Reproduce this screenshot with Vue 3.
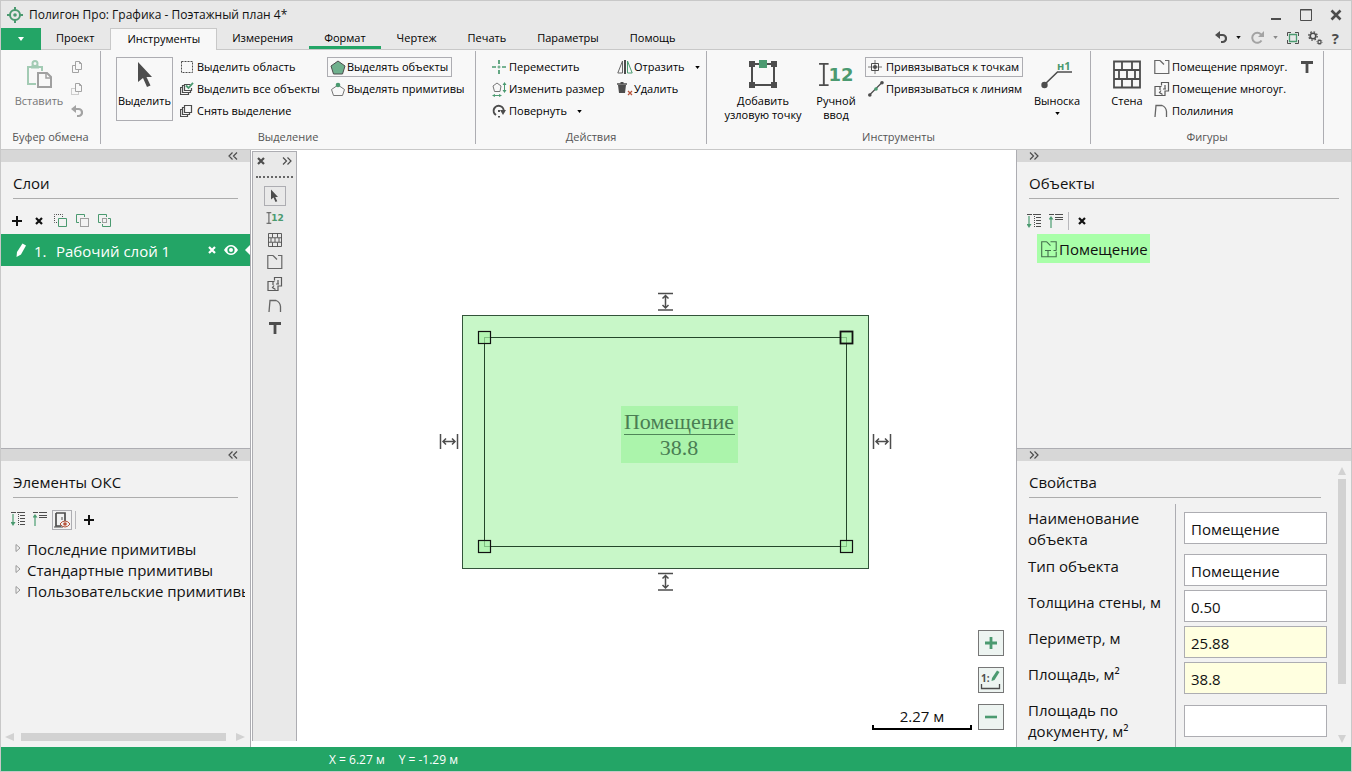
<script setup>
import { h, ref } from 'vue'

const D = '#4d4d4d'
const G = '#4b9a70'

const glyphs = {
  logo: [16, 16, `<g fill="none" stroke="${G}" stroke-width="2"><circle cx="8" cy="8" r="5"/><path d="M8 0v4M8 12v4M0 8h4M12 8h4"/></g><circle cx="8" cy="8" r="1.800" fill="${G}"/>`],
  caret: [6, 4, `<path d="M0 0h6L3 4z" fill="currentColor"/>`],
  paste: [26, 29, `<g fill="none" stroke="#a3cbb4" stroke-width="2"><path d="M10 24H2V7h14v4"/><circle cx="9" cy="3.500" r="2.500"/><path d="M5 7h8" stroke-width="3"/></g><path d="M12 13h9l4 4v10H12z" fill="#f8f8f8" stroke="#a0a0a0" stroke-width="2"/><path d="M20 13v5h5" fill="none" stroke="#a0a0a0" stroke-width="1.500"/>`],
  copy: [12, 13, `<g fill="none" stroke="#a3a3a3"><path d="M4.500 4.500h-3v7h6v-3"/><path d="M4.500.500h4l2 2v6h-6z"/><path d="M8.500.500v2h2"/></g>`],
  cut: [12, 13, `<g fill="none" stroke="#a3a3a3"><path d="M4.500 5.500h-4v6h7v-3" stroke-dasharray="1 1"/><path d="M4.500.500h4l2 2v6h-6z"/><path d="M8.500.500v2h2"/></g>`],
  undo: [12, 13, `<path d="M3 4h4.500a3 3 0 0 1 0 7H6" fill="none" stroke="currentColor" stroke-width="2.200"/><path d="M0 4l5-4v8z" fill="currentColor"/>`],
  redo: [14, 13, `<path d="M11 3.500a5 5 0 1 0 .5 6" fill="none" stroke="currentColor" stroke-width="2"/><path d="M14 0v6H8z" fill="currentColor"/>`],
  cursor: [16, 28, `<path d="M1 1v20l5-4 4 9 3.500-1.500-4-8.500H15z" fill="${D}"/>`],
  area: [14, 14, `<path d="M1.500 1.500h11v11h-11z" fill="none" stroke="${D}" stroke-dasharray="2 1"/>`],
  all: [14, 14, `<g fill="none" stroke="${D}" stroke-width="1.200"><path d="M2.500 5.500h-2v7h8v-2M4.500 3.500h-2v7h8v-2"/><path d="M10.500 2.500h-6v6h7V6"/></g><path d="M6 3.500l2.500 2.500L13 .800" fill="none" stroke="${G}" stroke-width="1.800"/>`],
  none: [14, 14, `<g fill="none" stroke="${D}" stroke-width="1.200"><path d="M2.500 5.500h-2v7h7v-2M4.500 3.500h-2v7h7v-2M4.500 1.500h7v7h-7z"/></g>`],
  pentagon: [16, 15, `<path d="M8 1l7 5-2.500 8h-9L1 6z" fill="#6fb08d" stroke="${D}"/>`],
  primitive: [16, 15, `<path d="M8 3l6.500 4.500-2 6h-9l-2-6z" fill="none" stroke="#777"/><circle cx="8" cy="3" r="2.300" fill="${G}"/>`],
  move: [14, 14, `<path d="M7 0v4M7 10v4M0 7h4M10 7h4" stroke="${G}" stroke-width="1.700"/><path d="M7 5.500v3M5.500 7h3" stroke="${G}"/>`],
  resize: [15, 15, `<path d="M5 1l4 3-1 5.500H2.500L1 4z" fill="none" stroke="#777"/><g stroke="${G}" fill="${G}"><path d="M12.500 2v7M2 13.500h6" fill="none"/><path d="M12.500 0l2 3h-4zM12.500 11l-2-3h4zM0 13.500l3-1.500v3zM10 13.500L7 12v3z" stroke="none"/></g>`],
  rotate: [14, 14, `<path d="M4 11A5 5 0 1 1 11.500 8" fill="none" stroke="${D}" stroke-width="2"/><path d="M8 6h6l-3 5z" fill="${D}"/><path d="M6 6h2v2H6zM6 12h2v1.500H6z" fill="${D}"/>`],
  mirror: [16, 14, `<path d="M5.500 1v12H.800z" fill="none" stroke="#666"/><path d="M8 0v14" stroke="${D}" stroke-width="2"/><path d="M10.500 1v12h4.700z" fill="none" stroke="${G}"/>`],
  trash: [16, 14, `<path d="M1 3h8l-1 8H2z" fill="${D}"/><path d="M0 2h10M3.500 .800h3" stroke="${D}" stroke-width="1.500"/><path d="M11 9l4 4M15 9l-4 4" stroke="#b8533a" stroke-width="1.200"/>`],
  node: [28, 29, `<path d="M3 4h22v21H3z" fill="none" stroke="${D}" stroke-width="2"/><path d="M0 1h6v6H0zM22 1h6v6h-6zM0 22h6v6H0zM22 22h6v6h-6z" fill="${D}"/><path d="M10 0h8v8h-8z" fill="${G}"/>`],
  manual: [34, 24, `<path d="M1 2h9M1 22h9" stroke="${D}" stroke-width="1.800"/><path d="M5.500 2v20" stroke="${D}" stroke-width="1.800"/><text x="10" y="18" font-family="DejaVu Sans" font-weight="bold" font-size="17" fill="${G}">12</text>`],
  snapPoint: [14, 14, `<path d="M7 0v3M7 11v3M0 7h3M11 7h3" stroke="#777"/><path d="M3.500 3.500h7v7h-7z" fill="none" stroke="${D}"/><path d="M7 4v6M4 7h6" stroke="#888"/><circle cx="7" cy="7" r="2" fill="${D}"/>`],
  snapLine: [16, 16, `<path d="M1.500 14L14 1.500" stroke="${D}" stroke-width="1.200"/><circle cx="1.800" cy="14" r="1.800" fill="${D}"/><circle cx="14" cy="1.800" r="1.800" fill="${D}"/><circle cx="8" cy="8" r="1.800" fill="${G}"/>`],
  callout: [32, 29, `<path d="M3 25L16.500 12H31" fill="none" stroke="${D}" stroke-width="1.600"/><circle cx="3.500" cy="25" r="3.200" fill="${D}"/><text x="16" y="10" font-family="Open Sans" font-weight="bold" font-size="11" fill="${G}">н1</text>`],
  wall: [28, 28, `<path d="M1 1h26v26H1zM1 9.500h26M1 18.500h26M9 1v8M19 1v8M14 10v8M22 10v8M6 10v8M9 19v8M19 19v8" fill="none" stroke="${D}" stroke-width="1.800"/>`],
  roomRect: [16, 16, `<path d="M6 1.500H.800v13h14V1.500H11M6 1.500l4 4" fill="none" stroke="#666" stroke-width="1.200"/>`],
  roomPoly: [16, 16, `<path d="M7.500 4.500V1.500h7v8.500H11v4.500H1v-9h6.500M6 6v3M7 9.500l-1.500 2 3 2M11 4v4M9 8h3" fill="none" stroke="#5a5a5a" stroke-width="1.200"/>`],
  polyline: [14, 14, `<path d="M1 13L2 1.500h6q4 1.500 4.500 6V13" fill="none" stroke="#666" stroke-width="1.300"/>`],
  letter: [14, 14, `<path d="M1 2.500h12M7 2.500V13" stroke="${D}" stroke-width="2.800"/>`],
  chevL: [10, 8, `<path d="M4.500.500L1 4l3.500 3.500M9 .500L5.500 4 9 7.500" fill="none" stroke="${D}" stroke-width="1.200"/>`],
  chevR: [10, 8, `<path d="M1 .500L4.500 4 1 7.500M5.500.500L9 4 5.500 7.500" fill="none" stroke="${D}" stroke-width="1.200"/>`],
  x: [8, 8, `<path d="M1 1l6 6M7 1L1 7" stroke="currentColor" stroke-width="2.200"/>`],
  plus: [10, 10, `<path d="M5 0v10M0 5h10" stroke="currentColor" stroke-width="2"/>`],
  minus: [12, 12, `<path d="M0 6h12" stroke="currentColor" stroke-width="2.600"/>`],
  zoomIn: [12, 12, `<path d="M6 0v12M0 6h12" stroke="currentColor" stroke-width="2.800"/>`],
  below: [14, 14, `<path d="M3 8.500H.500v-8h8V3" fill="none" stroke="${D}" stroke-dasharray="1 1"/><path d="M4.500 4.500h8v8h-8z" fill="none" stroke="${G}"/>`],
  above: [14, 14, `<path d="M3 8.500H.500v-8h8V3" fill="none" stroke="${G}"/><path d="M4.500 4.500h8v8h-8z" fill="none" stroke="${D}" stroke-dasharray="1 1"/>`],
  between: [14, 14, `<path d="M3 8.500H.500v-8h8V3M10 4.500h2.500v8h-8V10" fill="none" stroke="${G}"/><path d="M4.500 4.500h4v4h-4z" fill="none" stroke="${D}" stroke-dasharray="1 1"/>`],
  pencil: [12, 15, `<path d="M7.500.500L11 2.500 6 11.500 1.500 14 2 9z" fill="currentColor"/>`],
  eye: [14, 10, `<path d="M0 5q3-5 7-5t7 5q-3 5-7 5T0 5z" fill="#fff"/><circle cx="7" cy="5" r="2.800" fill="none" stroke="#23a566" stroke-width="1.600"/>`],
  expand: [15, 15, `<path d="M2 2v10" stroke="#8dbfa4" stroke-width="2"/><path d="M-.500 10h5L2 14z" fill="${G}"/><path d="M0 .500h5M6 .500h8M9 3.500h5M9 6.500h5M9 9.500h5M9 12.500h5" stroke="${D}"/><path d="M7.500 2v12" stroke="${D}" stroke-dasharray="1 1"/>`],
  collapse: [15, 15, `<path d="M2 4v10" stroke="#8dbfa4" stroke-width="2"/><path d="M-.500 5.500h5L2 2z" fill="${G}"/><path d="M0 .500h5M6 .500h8M6 3.500h8M6 5.500h8" stroke="${D}"/>`],
  door: [17, 16, `<path d="M2 1h9v9M2 1v13h5" fill="none" stroke="${D}" stroke-width="1.700"/><path d="M0 15h9" stroke="${D}"/><path d="M8 5v3" stroke="${D}"/><path d="M6 12q2-3 5-3t5 3q-2 3-5 3t-5-3z" fill="#f1f1f1" stroke="#b8533a"/><circle cx="11" cy="12" r="1.800" fill="#b8533a"/>`],
  branch: [6, 8, `<path d="M1 .500l4 3.500-4 3.500z" fill="none" stroke="#999"/>`],
  room: [16, 17, `<path d="M5.500.700H.700v15h14.500v-5M15.200 9V.700H9.500M5.500.700l4 4M4 9.500h6M7 9.500v6M12.500 9.500h3" fill="none" stroke="#44704d" stroke-width="1.100"/>`],
  minimize: [12, 12, `<path d="M1 10h10" stroke="${D}" stroke-width="2"/>`],
  maximize: [12, 12, `<path d="M.500.500h11v11H.500z" fill="none" stroke="${D}"/><path d="M0 1h12" stroke="${D}"/>`],
  close: [12, 12, `<path d="M1.500 1.500l9 9M10.500 1.500l-9 9" stroke="${D}" stroke-width="2.600"/>`],
  frame: [12, 12, `<path d="M.500 4V.500H4M8 .500h3.500V4M11.500 8v3.500H8M4 11.500H.500V8" fill="none" stroke="${D}"/><path d="M2.500 2.500h7v7h-7z" fill="none" stroke="${G}" stroke-width="1.300"/>`],
  gears: [15, 14, `<g fill="none" stroke="${D}"><circle cx="5" cy="5" r="2.800" stroke-width="1.600"/><circle cx="5" cy="5" r="4.200" stroke-width="1.300" stroke-dasharray="1.600 1.700"/><circle cx="11.500" cy="11" r="1.600" stroke-width="1.200"/><circle cx="11.500" cy="11" r="2.600" stroke-width=".8" stroke-dasharray="1 1"/></g>`],
  scale: [22, 20, `<text x="1" y="12" font-family="Open Sans" font-weight="bold" font-size="10" fill="${D}">1:</text><path d="M1.500 14v4.500h18V14" fill="none" stroke="${D}" stroke-width="1.300"/><path d="M17 .500l2.500 1.500-5 8-3 1 .5-3z" fill="${G}"/>`],
}

const Icon = (props) => {
  const [w, hh, body] = glyphs[props.name]
  return h('svg', {
    width: props.w || w,
    height: props.h || hh,
    viewBox: `0 0 ${w} ${hh}`,
    'aria-hidden': 'true',
    innerHTML: body,
  })
}
Icon.props = ['name', 'w', 'h']

const tabs = ['Проект', 'Инструменты', 'Измерения', 'Формат', 'Чертеж', 'Печать', 'Параметры', 'Помощь']
const selectCols = [
  [['area', 'Выделить область'], ['all', 'Выделить все объекты'], ['none', 'Снять выделение']],
  [['pentagon', 'Выделять объекты', true], ['primitive', 'Выделять примитивы']],
]
const strip = [
  ['cursor', 'Выделить', 9, 14], ['manual', 'Ручной ввод', 18, 14], ['wall', 'Стена', 14, 14],
  ['roomRect', 'Помещение прямоуг.', 16, 16], ['roomPoly', 'Помещение многоуг.', 16, 16],
  ['polyline', 'Полилиния', 14, 14], ['letter', 'Текст', 14, 14],
]
const tree = ['Последние примитивы', 'Стандартные примитивы', 'Пользовательские примитивы']
const fields = ref([
  { id: 'name', label: 'Наименование объекта', value: 'Помещение' },
  { id: 'type', label: 'Тип объекта', value: 'Помещение' },
  { id: 'wall', label: 'Толщина стены, м', value: '0.50' },
  { id: 'perimeter', label: 'Периметр, м', value: '25.88', computed: true },
  { id: 'area', label: 'Площадь, м²', value: '38.8', computed: true },
  { id: 'docArea', label: 'Площадь по документу, м²', value: '' },
])
const handles = [[46, 47, 1.2], [408, 47, 1.8], [46, 256, 1.2], [408, 256, 1.2]]
</script>

<template>
  <div class="app">
    <header class="titlebar">
      <Icon name="logo" />
      <h1>Полигон Про: Графика - Поэтажный план 4*</h1>
      <div class="window-buttons">
        <button aria-label="Свернуть"><Icon name="minimize" /></button>
        <button aria-label="Развернуть"><Icon name="maximize" /></button>
        <button aria-label="Закрыть"><Icon name="close" /></button>
      </div>
    </header>

    <nav class="tabs">
      <button class="file" aria-label="Файл"><Icon name="caret" /></button>
      <button v-for="t in tabs" :key="t" class="tab" :class="{ active: t === 'Инструменты', marked: t === 'Формат' }">{{ t }}</button>
      <div class="quick">
        <button aria-label="Отменить"><Icon name="undo" /></button>
        <button class="drop" aria-label="История отмены"><Icon name="caret" w="5" h="3" /></button>
        <button class="faded" aria-label="Повторить"><Icon name="redo" /></button>
        <button class="drop grey" aria-label="История повтора"><Icon name="caret" w="5" h="3" /></button>
        <button aria-label="Показать всё"><Icon name="frame" /></button>
        <button aria-label="Настройки"><Icon name="gears" /></button>
        <button class="help">?</button>
      </div>
    </nav>

    <div class="ribbon">
      <section class="group g-clip">
        <div class="tools">
          <button class="big faded-text"><Icon name="paste" /><span>Вставить</span></button>
          <div class="column mini">
            <button aria-label="Копировать"><Icon name="copy" /></button>
            <button aria-label="Вырезать"><Icon name="cut" /></button>
            <button class="faded" aria-label="Отменить"><Icon name="undo" /></button>
          </div>
        </div>
        <h2>Буфер обмена</h2>
      </section>
      <section class="group g-select">
        <div class="tools">
          <button class="big framed"><Icon name="cursor" /><span>Выделить</span></button>
          <div v-for="(col, i) in selectCols" :key="i" class="column">
            <button v-for="b in col" :key="b[1]" class="cmd" :class="{ on: b[2] }"><span class="ico"><Icon :name="b[0]" /></span>{{ b[1] }}</button>
          </div>
        </div>
        <h2>Выделение</h2>
      </section>
      <section class="group g-actions">
        <div class="tools">
          <div class="column">
            <button class="cmd"><span class="ico"><Icon name="move" /></span>Переместить</button>
            <button class="cmd"><span class="ico"><Icon name="resize" /></span>Изменить размер</button>
            <button class="cmd"><span class="ico"><Icon name="rotate" /></span>Повернуть<Icon name="caret" w="5" h="3" class="more" /></button>
          </div>
          <div class="column">
            <button class="cmd"><span class="ico"><Icon name="mirror" /></span>Отразить<Icon name="caret" w="5" h="3" class="more" /></button>
            <button class="cmd"><span class="ico"><Icon name="trash" /></span>Удалить</button>
          </div>
        </div>
        <h2>Действия</h2>
      </section>
      <section class="group g-tools">
        <div class="tools">
          <button class="big wide"><Icon name="node" /><span>Добавить<br>узловую точку</span></button>
          <button class="big narrow"><Icon name="manual" w="36" h="29" /><span>Ручной<br>ввод</span></button>
          <div class="column">
            <button class="cmd on"><span class="ico"><Icon name="snapPoint" /></span>Привязываться к точкам</button>
            <button class="cmd"><span class="ico"><Icon name="snapLine" /></span>Привязываться к линиям</button>
          </div>
          <button class="big"><Icon name="callout" /><span>Выноска</span><Icon name="caret" w="5" h="3" class="under" /></button>
        </div>
        <h2>Инструменты</h2>
      </section>
      <section class="group g-shapes">
        <div class="tools">
          <button class="big"><Icon name="wall" h="29" /><span>Стена</span></button>
          <div class="column">
            <button class="cmd"><span class="ico"><Icon name="roomRect" /></span>Помещение прямоуг.</button>
            <button class="cmd"><span class="ico"><Icon name="roomPoly" /></span>Помещение многоуг.</button>
            <button class="cmd"><span class="ico"><Icon name="polyline" /></span>Полилиния</button>
          </div>
          <div class="column letter"><button aria-label="Текст"><Icon name="letter" /></button></div>
        </div>
        <h2>Фигуры</h2>
      </section>
    </div>

    <main class="body">
      <aside class="side left">
        <section class="panel">
          <div class="grip"><button aria-label="Скрыть слои"><Icon name="chevL" /></button></div>
          <h2>Слои</h2>
          <div class="toolbar">
            <button aria-label="Добавить слой"><Icon name="plus" /></button>
            <button aria-label="Удалить слой"><Icon name="x" /></button>
            <button aria-label="На задний план"><Icon name="below" /></button>
            <button aria-label="На передний план"><Icon name="above" /></button>
            <button aria-label="Объединить"><Icon name="between" /></button>
          </div>
          <div class="layer">
            <Icon name="pencil" />
            <span class="num">1.</span>
            <span class="layer-name">Рабочий слой 1</span>
            <button aria-label="Удалить"><Icon name="x" /></button>
            <button aria-label="Видимость"><Icon name="eye" /></button>
            <i class="notch"></i>
          </div>
        </section>
        <section class="panel">
          <div class="grip"><button aria-label="Скрыть элементы"><Icon name="chevL" /></button></div>
          <h2>Элементы ОКС</h2>
          <div class="toolbar lists">
            <button aria-label="Развернуть всё"><Icon name="expand" /></button>
            <button aria-label="Свернуть всё"><Icon name="collapse" /></button>
            <button class="pressed" aria-label="Показ"><Icon name="door" /></button>
            <i class="sep"></i>
            <button aria-label="Добавить"><Icon name="plus" /></button>
          </div>
          <ul class="tree">
            <li v-for="n in tree" :key="n"><Icon name="branch" /><span>{{ n }}</span></li>
          </ul>
          <div class="hscroll"><i class="arr-l"></i><i class="thumb"></i><i class="arr-r"></i></div>
        </section>
      </aside>

      <div class="strip">
        <div class="strip-head">
          <button aria-label="Закрыть панель"><Icon name="x" /></button>
          <button aria-label="Развернуть панель"><Icon name="chevR" /></button>
        </div>
        <button v-for="(s, i) in strip" :key="s[0]" class="strip-btn" :class="{ pressed: i === 0 }" :aria-label="s[1]"><Icon :name="s[0]" :w="s[2]" :h="s[3]" /></button>
      </div>

      <div class="canvas">
        <svg class="plan" width="456" height="304" viewBox="0 0 456 304">
          <rect x="24.500" y="25.500" width="406" height="253" fill="#c8f7c8" stroke="#33543a" />
          <rect x="46.500" y="47.500" width="362" height="209" fill="none" stroke="#24472a" />
          <rect v-for="(p, i) in handles" :key="i" :x="p[0] - 5.5" :y="p[1] - 5.5" width="12" height="12" fill="#a9f3a9" fill-opacity=".7" stroke="#111" :stroke-width="p[2]" />
          <rect x="183" y="116" width="117" height="57" fill="#abf4ab" />
          <g class="plan-text" text-anchor="middle">
            <text x="241" y="139">Помещение</text>
            <text x="241" y="165">38.8</text>
          </g>
          <path d="M186 144.500h111" stroke="#4f8558" />
          <g fill="none" stroke="#4d4d4d" stroke-width="1.500">
            <path d="M220 3.500h15M220 20h15M227.500 6v11M224.500 8.500l3-3 3 3M224.500 15l3 3 3-3" />
            <path d="M220 283.500h15M220 300h15M227.500 286v11M224.500 288.500l3-3 3 3M224.500 295l3 3 3-3" />
            <path d="M2.500 144v15M19.500 144v15M5 151.500h12M8 148.500l-3 3 3 3M14 148.500l3 3-3 3" />
            <path d="M435.500 144v15M452.500 144v15M438 151.500h12M441 148.500l-3 3 3 3M447 148.500l3 3-3 3" />
          </g>
        </svg>
        <div class="map-tools">
          <div class="ruler">2.27 м</div>
          <div class="zoom">
            <button aria-label="Приблизить"><Icon name="zoomIn" /></button>
            <button aria-label="Масштаб"><Icon name="scale" /></button>
            <button aria-label="Отдалить"><Icon name="minus" /></button>
          </div>
        </div>
      </div>

      <aside class="side right">
        <section class="panel">
          <div class="grip"><button aria-label="Скрыть объекты"><Icon name="chevR" /></button></div>
          <h2>Объекты</h2>
          <div class="toolbar lists">
            <button aria-label="Развернуть всё"><Icon name="expand" /></button>
            <button aria-label="Свернуть всё"><Icon name="collapse" /></button>
            <i class="sep"></i>
            <button aria-label="Удалить"><Icon name="x" /></button>
          </div>
          <button class="object"><Icon name="room" />Помещение</button>
        </section>
        <section class="panel">
          <div class="grip"><button aria-label="Скрыть свойства"><Icon name="chevR" /></button></div>
          <div class="props">
            <div class="props-main">
              <h2>Свойства</h2>
              <form class="form" @submit.prevent>
                <div v-for="f in fields" :key="f.id" class="row">
                  <label :for="f.id">{{ f.label }}</label>
                  <div class="cell"><input :id="f.id" v-model="f.value" type="text" :readonly="f.computed" :class="{ computed: f.computed }"></div>
                </div>
              </form>
            </div>
            <div class="vscroll"><i class="arr-u"></i><i class="thumb"></i><i class="arr-d"></i></div>
          </div>
        </section>
      </aside>
    </main>

    <footer class="status"><span>X = 6.27 м</span><span>Y = -1.29 м</span></footer>
  </div>
</template>

<style>
body { margin: 0; }
</style>

<style scoped>
* { box-sizing: border-box; }
.app { height: 100vh; display: flex; flex-direction: column; border: 1px solid #c8c8c8; background: #e8e8e8; color: #111; font: 12px/14px "Open Sans", "Noto Sans", sans-serif; overflow: hidden; }
button { font: inherit; color: inherit; background: none; border: 0; padding: 0; margin: 0; display: flex; align-items: center; justify-content: center; white-space: nowrap; }
svg { display: block; flex: none; }
h1, h2 { margin: 0; font-weight: normal; font-size: inherit; }

.titlebar { height: 27px; flex: none; display: flex; align-items: center; gap: 6px; padding: 0 9px 0 6px; }
.titlebar h1 { flex: 1; }
.window-buttons { display: flex; gap: 18px; }

.tabs { height: 22px; flex: none; display: flex; border-bottom: 1px solid #c8c8c8; font-size: 11px; color: #000; }
.file { width: 40px; height: 22px; background: #23a566; color: #fff; }
.tab { padding: 0 15px 2px; height: 21px; margin-right: 1px; }
.tab.active { height: 22px; padding: 0 16px 1px; background: #f8f8f8; border: 1px solid #c8c8c8; border-bottom: 0; margin: 0; }
.tab.marked { border-bottom: 3px solid #23a566; padding-top: 2px; padding-bottom: 1px; }
.quick { margin-left: auto; display: flex; align-items: center; padding: 0 12px 2px 0; gap: 9px; color: #4d4d4d; }
.drop { color: #111; width: 5px; }
.grey { color: #888; }
.faded { color: #a3a3a3; }
.help { font-weight: bold; font-size: 15px; }

.ribbon { height: 100px; flex: none; display: flex; background: #f8f8f8; border-bottom: 1px solid #c8c8c8; padding-top: 1px; font-size: 11px; color: #000; }
.group { height: 93px; display: flex; flex-direction: column; justify-content: space-between; border-right: 1px solid #adadb2; }
.group h2 { text-align: center; color: #555; line-height: 14px; }
.tools { display: flex; padding-top: 5px; height: 76px; }
.g-clip { width: 100px; }
.g-select { width: 375px; }
.g-actions { width: 231px; }
.g-tools { width: 384px; }
.g-shapes { width: 233px; }
.big { flex-direction: column; justify-content: flex-start; padding-top: 4px; height: 66px; line-height: 14px; }
.big > span { margin-top: 5px; }
.big .under { margin-top: 4px; }
.framed { width: 57px; height: 64px; margin-top: 1px; padding-top: 3px; border: 1px solid #adadb2; }
.faded-text { color: #777; }
.column { display: flex; flex-direction: column; align-items: flex-start; }
.cmd { height: 20px; margin: 1px 0; padding: 0 3px 0 2px; border: 1px solid transparent; }
.cmd.on { border-color: #adadb2; }
.ico { width: 17px; display: flex; }
.more { margin-left: 10px; }
.column.mini { margin-left: -6px; }
.mini button { width: 12px; height: 22px; }
.g-clip .big { width: 76px; }
.g-select .tools { padding-left: 15px; }
.g-select .column { width: 150px; margin-left: 4px; }
.g-select .column + .column { width: auto; margin-left: 0; }
.g-actions .tools { padding-left: 13px; }
.g-actions .column { width: 125px; flex: none; }
.g-actions .column + .column { width: auto; }
.g-tools .tools { padding-left: 6px; }
.g-tools .big { width: 60px; }
.g-tools .big.wide { width: 100px; }
.g-tools .big.narrow { width: 46px; }
.g-tools .column { width: 162px; margin-left: 6px; }
.g-tools .ico { width: 18px; }
.g-shapes .big { width: 72px; }
.g-shapes .column { width: 138px; margin-left: -12px; }
.g-shapes .ico { width: 18px; }
.g-shapes .column.letter { width: 14px; margin-left: 11px; }
.letter button { height: 22px; }

.body { flex: 1; min-height: 0; display: flex; background: #fff; }
.side { display: grid; grid-template-rows: 1fr 1fr; background: #f2f2f2; font-size: 15px; line-height: 21px; flex: none; }
.left { width: 250px; border-right: 1px solid #adadb2; }
.right { width: 335px; border-left: 1px solid #adadb2; }
.panel { min-height: 0; min-width: 0; overflow: hidden; display: flex; flex-direction: column; }
.panel:first-child { border-bottom: 1px solid #adadb2; }
.grip { height: 12px; flex: none; background: #d7d7d7; display: flex; align-items: center; padding: 0 12px; }
.left .grip { justify-content: flex-end; }
.panel h2 { flex: none; margin: 12px 12px 0; height: 25px; border-bottom: 1px solid #adadad; line-height: 18px; }
.toolbar { flex: none; display: flex; align-items: center; height: 20px; margin-top: 12px; padding-left: 5px; color: #111; }
.toolbar.lists { padding-left: 6px; }
.toolbar button { width: 22px; height: 20px; }
.toolbar .pressed { width: 20px; margin: 0 2px 0 1px; }
.pressed { border: 1px solid #adadb2; }
.sep { width: 1px; height: 18px; background: #b8b8bc; margin-left: 1px; }
.sep + button { margin-left: 2px; }
.layer { flex: none; height: 32px; margin-top: 3px; background: #23a566; color: #fff; display: flex; align-items: center; position: relative; padding-left: 14px; }
.num { margin-left: 7px; width: 22px; padding-top: 2px; }
.layer-name { flex: 1; padding-top: 2px; }
.layer button + button { margin: 0 12px 0 8px; }
.notch { position: absolute; right: 0; top: 11px; border: 5px solid transparent; border-right-color: #fff; border-left: 0; }
.tree { list-style: none; margin: 9px 5px 0 14px; padding: 0; overflow: hidden; flex: 1; white-space: nowrap; }
.tree li { display: flex; align-items: center; gap: 6px; height: 21px; }
.tree svg { margin-bottom: 2px; }
.hscroll { flex: none; display: flex; align-items: center; height: 20px; padding: 0 5px 0 4px; }
.hscroll .thumb { flex: 1; height: 8px; background: #d2d2d2; margin: 0 10px 0 7px; }
.arr-l, .arr-r { border: 4px solid transparent; width: 9px; height: 8px; }
.arr-l { border-right: 9px solid #d2d2d2; border-left: 0; }
.arr-r { border-left: 9px solid #d2d2d2; border-right: 0; }

.strip { width: 45px; flex: none; margin: 1px 0 6px 1px; background: #e9e9e9; border: solid #adadb2; border-width: 1px 1px 0; display: flex; flex-direction: column; align-items: center; }
.strip-head { width: 37px; height: 26px; display: flex; justify-content: space-between; align-items: flex-start; padding: 5px 1px 0; border-bottom: 2px dotted #666; margin-bottom: 8px; color: #4d4d4d; }
.strip-btn { width: 22px; height: 20px; margin-bottom: 2px; }

.canvas { flex: 1; position: relative; min-width: 0; }
.plan { position: absolute; left: 141px; top: 140px; }
.plan-text { font: 22px "Liberation Serif", serif; fill: #4a7d53; }
.map-tools { position: absolute; right: 12px; bottom: 17px; display: flex; align-items: flex-end; gap: 6px; }
.ruler { width: 100px; height: 26px; text-align: center; font-size: 15px; line-height: 24px; border-bottom: 2px solid #000; background: linear-gradient(#000, #000) left bottom / 2px 3px no-repeat, linear-gradient(#000, #000) right bottom / 2px 3px no-repeat; }
.zoom { display: grid; gap: 11px; }
.zoom button { width: 26px; height: 26px; border: 1px solid #777; background: #edf4f1; color: #4b9a70; }

.object { align-self: flex-start; height: 29px; margin: 3px 0 0 20px; padding: 1px 2px 0 4px; gap: 2px; background: #a9ffa9; }
.props { flex: 1; min-height: 0; display: flex; }
.props-main { flex: 1; min-width: 0; overflow: hidden; display: flex; flex-direction: column; }
.props-main h2 { margin-right: 7px; }
.form { flex: 1; margin: 6px 0 0 11px; display: flex; flex-direction: column; }
.row { display: grid; grid-template-columns: 147px 1fr; flex: none; }
.row:last-child { flex: 1 0 auto; }
.row label { padding: 4px 8px 2px 0; }
.cell { border-left: 1px solid #adadb2; padding: 2px 1px 2px 8px; display: flex; align-items: center; }
.cell input { width: 100%; min-width: 0; height: 32px; border: 1px solid #adadb2; background: #fff; padding: 3px 6px 0; font: inherit; color: inherit; border-radius: 0; outline: 0; }
.cell input.computed { background: #ffffe0; }
.vscroll { width: 23px; flex: none; display: flex; flex-direction: column; align-items: center; padding: 6px 0 4px 4px; }
.vscroll .thumb { width: 8px; height: 205px; background: #d2d2d2; margin: 4px 0 auto; }
.arr-u, .arr-d { border: 4px solid transparent; }
.arr-u { border-bottom: 8px solid #d2d2d2; border-top: 0; }
.arr-d { border-top: 8px solid #d2d2d2; border-bottom: 0; }

.status { height: 24px; flex: none; display: flex; align-items: center; gap: 14px; padding: 1px 0 0 328px; background: #23a566; color: #fff; }
</style>
